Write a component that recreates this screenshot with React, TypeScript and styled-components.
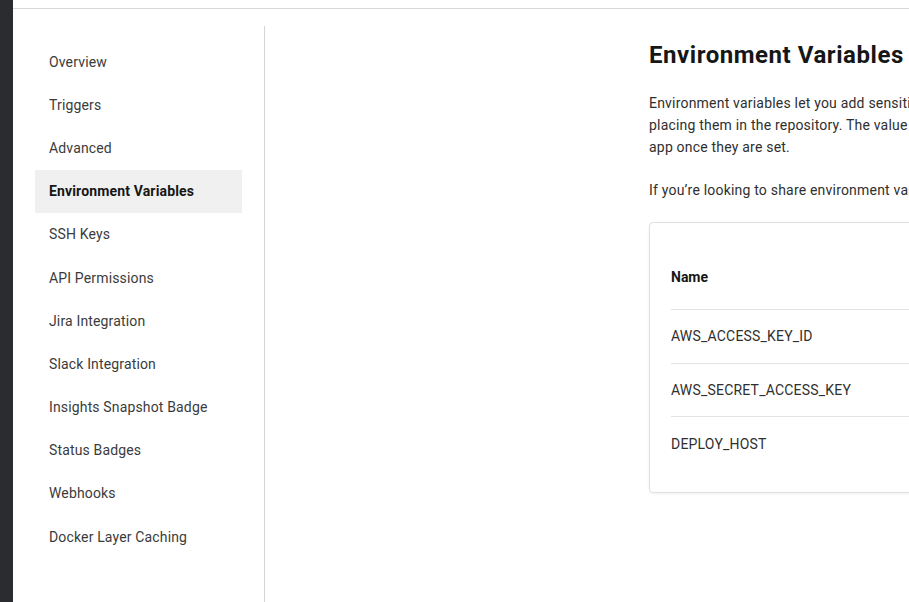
import React from "react";
import styled, { createGlobalStyle } from "styled-components";

const Global = createGlobalStyle`
  html, body { margin: 0; padding: 0; background: #fff; }
  body { font-family: Roboto, "Noto Sans", Arial, sans-serif; color: #161616; overflow: hidden; }
  * { box-sizing: border-box; }
`;

const Shell = styled.div`
  display: flex;
  height: 602px;
  width: 909px;
  overflow: hidden;
`;

const DarkRail = styled.div`
  width: 13px;
  flex: none;
  background: #2b2c30;
`;

const Main = styled.div`
  flex: 1;
  display: flex;
  flex-direction: column;
  min-width: 0;
`;

const TopBar = styled.div`
  height: 9px;
  flex: none;
  border-bottom: 1px solid #d8d8d8;
`;

const Body = styled.div`
  flex: 1;
  display: flex;
  padding-top: 17px;
  min-height: 0;
`;

const Sidebar = styled.nav`
  width: 252px;
  flex: none;
  padding: 14px 22px 0 22px;
  border-right: 1px solid #d4d4d4;
  display: flex;
  flex-direction: column;
`;

const NavItem = styled.div<{ $active?: boolean }>`
  height: 43.2px;
  flex: none;
  display: flex;
  align-items: center;
  padding: 0 14px;
  font-size: 14px;
  color: ${(p) => (p.$active ? "#161616" : "#3b3b3b")};
  font-weight: ${(p) => (p.$active ? 700 : 400)};
  background: ${(p) => (p.$active ? "#f0f0f0" : "transparent")};
  letter-spacing: 0.15px;
  white-space: nowrap;
`;

const Content = styled.section`
  flex: 1;
  min-width: 0;
  padding: 15px 0 0 384px;
  overflow: hidden;
`;

const Inner = styled.div`
  width: 580px;
`;

const Title = styled.h1`
  margin: 0 0 23px 0;
  font-size: 24px;
  line-height: 28px;
  font-weight: 700;
  color: #161616;
  white-space: nowrap;
  letter-spacing: 0.55px;
`;

const Para = styled.p`
  margin: 0 0 21px 0;
  font-size: 14px;
  line-height: 22px;
  color: #2f2f2f;
  letter-spacing: 0.2px;
`;

const Card = styled.div`
  margin-top: 13px;
  border: 1px solid #e0e0e0;
  border-radius: 4px;
  box-shadow: 0 1px 3px rgba(0, 0, 0, 0.06);
  padding: 21px 0 21px 21px;
  width: 580px;
`;

const HeaderRow = styled.div`
  height: 66px;
  display: flex;
  align-items: center;
  font-size: 14px;
  font-weight: 700;
  color: #161616;
  border-bottom: 1px solid #e3e3e3;
`;

const Row = styled.div<{ $last?: boolean }>`
  height: 53.5px;
  display: flex;
  align-items: center;
  font-size: 14px;
  color: #2f2f2f;
  border-bottom: ${(p) => (p.$last ? "none" : "1px solid #e3e3e3")};
  letter-spacing: 0.2px;
`;

const navItems = [
  "Overview",
  "Triggers",
  "Advanced",
  "Environment Variables",
  "SSH Keys",
  "API Permissions",
  "Jira Integration",
  "Slack Integration",
  "Insights Snapshot Badge",
  "Status Badges",
  "Webhooks",
  "Docker Layer Caching",
];

const vars = ["AWS_ACCESS_KEY_ID", "AWS_SECRET_ACCESS_KEY", "DEPLOY_HOST"];

export default function App() {
  return (
    <>
      <Global />
      <Shell>
        <DarkRail />
        <Main>
          <TopBar />
          <Body>
            <Sidebar>
              {navItems.map((n) => (
                <NavItem key={n} $active={n === "Environment Variables"}>
                  {n}
                </NavItem>
              ))}
            </Sidebar>
            <Content>
              <Inner>
                <Title>Environment Variables</Title>
                <Para>
                  Environment variables let you add sensitive data (e.g. API keys) to your jobs rather than
                  placing them in the repository. The value of the variables cannot be read or edited in the
                  app once they are set.
                </Para>
                <Para>
                  If you’re looking to share environment variables across projects, try Contexts.
                </Para>
                <Card>
                  <HeaderRow>Name</HeaderRow>
                  {vars.map((v, i) => (
                    <Row key={v} $last={i === vars.length - 1}>
                      {v}
                    </Row>
                  ))}
                </Card>
              </Inner>
            </Content>
          </Body>
        </Main>
      </Shell>
    </>
  );
}
